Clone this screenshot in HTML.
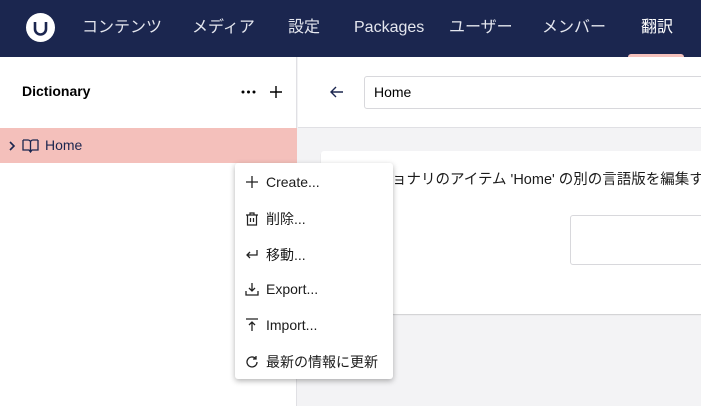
<!DOCTYPE html>
<html><head><meta charset="utf-8"><style>
*{box-sizing:border-box;margin:0;padding:0}
body{width:701px;height:406px;overflow:hidden;font-family:"Liberation Sans","Noto Sans CJK JP",sans-serif;background:#f3f3f5;position:relative;color:#1b264f}
.top{position:absolute;left:0;top:0;width:701px;height:57px;background:#1b264f}
.logo{position:absolute;left:26px;top:13px;width:29px;height:29px;border-radius:50%;background:#fff}
.nav{position:absolute;top:17px;height:22px;line-height:22px;color:#e4e6ee;font-size:16px;white-space:nowrap}
.ul{position:absolute;left:628px;top:54px;width:56px;height:3px;background:#f5c1bc;border-radius:3px 3px 0 0}
.side{position:absolute;left:0;top:57px;width:297px;height:349px;background:#fff;border-right:1px solid #e0e0e4}
.hdr{position:absolute;left:298px;top:57px;width:403px;height:71px;background:#fff;border-bottom:1px solid #e0e0e4}
.inp{position:absolute;left:364px;top:76px;width:350px;height:33px;border:1px solid #d8d8dc;border-radius:3px;background:#fff;font-size:14px;padding:0 9px;line-height:31px;color:#000}
.card{position:absolute;left:321px;top:151px;width:400px;height:163px;background:#fff;border-radius:3px;box-shadow:0 1px 1px rgba(0,0,0,.15)}
.box{position:absolute;left:570px;top:215px;width:150px;height:50px;border:1px solid #d8d8dc;border-radius:3px}
.menu{position:absolute;left:235px;top:163px;width:158px;height:216px;background:#fff;border-radius:3px;box-shadow:0 2px 6px rgba(0,0,0,.3)}
.mi{position:absolute;left:10px;height:20px;font-size:14px;color:#1b1b1b;white-space:nowrap}
.mi svg{position:absolute;left:0;top:3px}
.mi span{position:absolute;left:21px;top:0;height:20px;line-height:20px}
</style></head><body>
<div class="top">
<div class="logo"><svg width="29" height="29"><path d="M9 9v7a5.5 5.5 0 0 0 11 0V9" fill="none" stroke="#1b264f" stroke-width="2.6"/></svg></div>
<div class="nav" style="left:82px">コンテンツ</div>
<div class="nav" style="left:192px">メディア</div>
<div class="nav" style="left:288px">設定</div>
<div class="nav" style="left:354px">Packages</div>
<div class="nav" style="left:449px">ユーザー</div>
<div class="nav" style="left:542px">メンバー</div>
<div class="nav" style="left:641px;color:#fff">翻訳</div>
<div class="ul"></div>
</div>
<div class="side">
<div style="position:absolute;left:22px;top:26px;font-size:14px;font-weight:bold;color:#000">Dictionary</div>
<svg style="position:absolute;left:241px;top:33px" width="16" height="5"><circle cx="2" cy="2" r="1.5" fill="#000"/><circle cx="7.5" cy="2" r="1.5" fill="#000"/><circle cx="13" cy="2" r="1.5" fill="#000"/></svg>
<svg style="position:absolute;left:270px;top:29px" width="12" height="12"><path d="M6 0v12M0 6h12" stroke="#000" stroke-width="1.4"/></svg>
<div style="position:absolute;left:0;top:71px;width:297px;height:35px;background:#f4c0bb">
<svg style="position:absolute;left:8px;top:12px" width="8" height="12"><path d="M2 2l4 4-4 4" fill="none" stroke="#1b264f" stroke-width="1.6"/></svg>
<svg style="position:absolute;left:22px;top:10px" width="17" height="15"><path d="M1 2h5a2.5 2.5 0 0 1 2.5 2.5V14M16 2h-5a2.5 2.5 0 0 0-2.5 2.5M1 2v10h6l1.5 2 1.5-2h6V2" fill="none" stroke="#1b264f" stroke-width="1.3"/></svg>
<div style="position:absolute;left:45px;top:9px;font-size:14px">Home</div>
</div>
</div>
<div class="hdr"><svg style="position:absolute;left:32px;top:29px" width="14" height="12"><path d="M13 6H2M6 1L1 6l5 5" fill="none" stroke="#1b264f" stroke-width="1.4"/></svg></div>
<div class="inp">Home</div>
<div class="card"><div style="position:absolute;left:14px;top:19px;height:20px;line-height:20px;font-size:14.5px;color:#1b1b1b;white-space:nowrap">ディクショナリのアイテム 'Home' の別の言語版を編集する</div></div>
<div class="box"></div>
<div class="menu">
<div class="mi" style="top:9px"><svg width="14" height="14"><path d="M7 1v12M1 7h12" stroke="#222" stroke-width="1.3"/></svg><span>Create...</span></div>
<div class="mi" style="top:46px"><svg width="14" height="14"><path d="M1 3h12M5 3V1h4v2M2.5 3v10h9V3M5.5 6v4M8.5 6v4" fill="none" stroke="#222" stroke-width="1.2"/></svg><span>削除...</span></div>
<div class="mi" style="top:82px"><svg width="14" height="14"><path d="M12 2v5H2M5 4L2 7l3 3" fill="none" stroke="#222" stroke-width="1.3"/></svg><span>移動...</span></div>
<div class="mi" style="top:116px"><svg width="14" height="14"><path d="M7 1v8M4 6l3 3 3-3M1 9v4h12V9" fill="none" stroke="#222" stroke-width="1.3"/></svg><span>Export...</span></div>
<div class="mi" style="top:152px"><svg width="14" height="14"><path d="M1 1h12M7 13V4M4 7l3-3 3 3" fill="none" stroke="#222" stroke-width="1.3"/></svg><span>Import...</span></div>
<div class="mi" style="top:189px"><svg width="14" height="14"><path d="M12 7a5 5 0 1 1-1.5-3.6M11 1v3H8" fill="none" stroke="#222" stroke-width="1.3"/></svg><span>最新の情報に更新</span></div>
</div>
</body></html>
